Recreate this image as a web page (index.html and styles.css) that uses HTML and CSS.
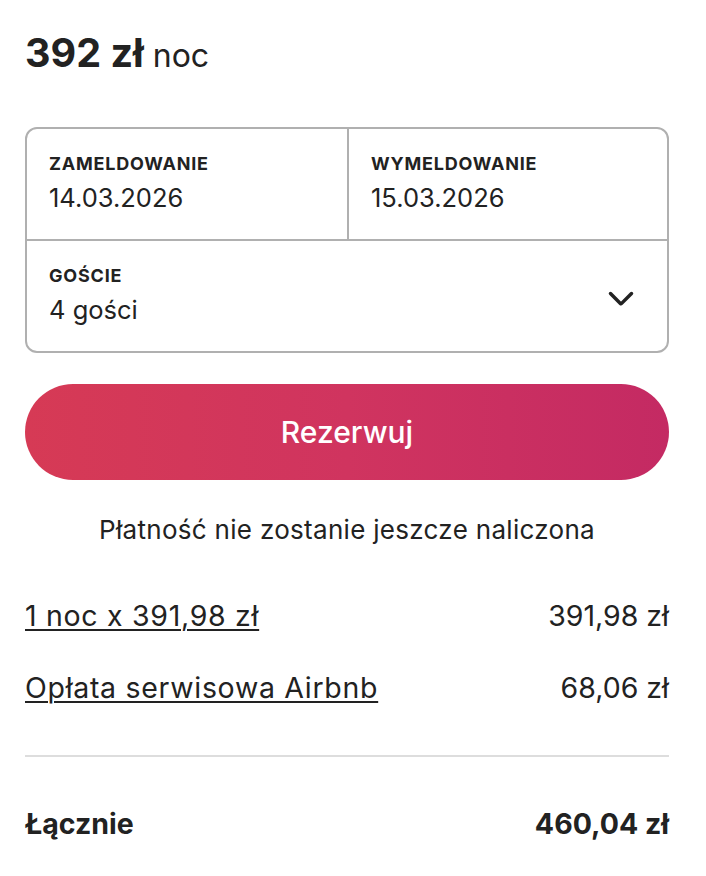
FILE: index.html
```html
<!DOCTYPE html>
<html lang="pl">
<head>
    <meta charset="UTF-8">
    <meta name="viewport" content="width=device-width, initial-scale=1.0">
    <title>Rezerwacja</title>
    <link rel="stylesheet" href="styles.css">
</head>
<body>

<section class="booking">
    <h1 class="price"><span class="amount">392 zł</span> <span class="per">noc</span></h1>

    <div class="picker">
        <div class="dates">
            <div class="field">
                <div class="label">ZAMELDOWANIE</div>
                <div class="value">14.03.2026</div>
            </div>
            <div class="field right">
                <div class="label">WYMELDOWANIE</div>
                <div class="value">15.03.2026</div>
            </div>
        </div>
        <div class="field guests">
            <div>
                <div class="label">GOŚCIE</div>
                <div class="value">4 gości</div>
            </div>
            <svg class="chevron" viewBox="0 0 32 32" width="28" height="28" aria-hidden="true">
                <path d="M28 12 16.7 23.3a1 1 0 0 1-1.4 0L4 12" fill="none" stroke="#222" stroke-width="4" stroke-linecap="round"/>
            </svg>
        </div>
    </div>

    <button type="button" class="btn-reserve">Rezerwuj</button>

    <p class="note">Płatność nie zostanie jeszcze naliczona</p>

    <!-- Price breakdown -->
    <div class="rows">
        <div class="row">
            <a href="#" class="link">1 noc x 391,98 zł</a>
            <span>391,98 zł</span>
        </div>
        <div class="row">
            <a href="#" class="link">Opłata serwisowa Airbnb</a>
            <span>68,06 zł</span>
        </div>
    </div>

    <div class="row total">
        <span>Łącznie</span>
        <span>460,04 zł</span>
    </div>
</section>

</body>
</html>
```

FILE: styles.css
```css
/* Styles */
body {
    font-family: Inter, "Noto Sans", sans-serif;
    margin: 0;
    padding: 0;
    background: #fff;
    color: #222;
}

.booking {
    padding: 26px 37px 0 25px;
}

.price {
    margin: 0;
    font-weight: normal;
    line-height: 54px;
}

.price .amount {
    font-size: 39.5px;
    font-weight: 700;
}

.price .per {
    font-size: 32px;
}

.picker {
    margin-top: 44px;
    border: 2px solid #b0b0b0;
    border-radius: 12px;
}

.dates {
    display: grid;
    grid-template-columns: 1fr 1fr;
    border-bottom: 2px solid #b0b0b0;
}

.field {
    padding: 24px 22px 22px;
}

.field.right {
    border-left: 2px solid #b0b0b0;
}

.label {
    font-size: 18px;
    font-weight: 700;
    letter-spacing: 0.8px;
    line-height: 22px;
}

.value {
    margin-top: 4px;
    font-size: 25.5px;
    line-height: 38px;
}

.guests {
    display: flex;
    align-items: center;
    justify-content: space-between;
    padding-right: 32px;
}

.chevron {
    display: block;
}

.btn-reserve {
    display: block;
    width: 100%;
    height: 96px;
    margin-top: 31px;
    border: none;
    border-radius: 48px;
    background: linear-gradient(to right, #d63a55 0%, #d0345f 50%, #c42a63 100%);
    color: #fff;
    font-family: inherit;
    font-size: 30px;
    font-weight: 500;
    cursor: pointer;
}

.note {
    margin: 33px 0 0;
    text-align: center;
    font-size: 26px;
    letter-spacing: 0.3px;
    line-height: 34px;
}

.rows {
    margin-top: 49px;
    padding-bottom: 47px;
    border-bottom: 2px solid #ddd;
}

.row {
    display: flex;
    justify-content: space-between;
    font-size: 28.5px;
    line-height: 40px;
}

.row .link {
    letter-spacing: 0.7px;
}

.row + .row {
    margin-top: 32px;
}

.link {
    color: #222;
    text-decoration: underline;
    text-underline-offset: 3px;
    text-decoration-thickness: 2px;
}

.total {
    margin-top: 47px;
    font-weight: 700;
}
```
